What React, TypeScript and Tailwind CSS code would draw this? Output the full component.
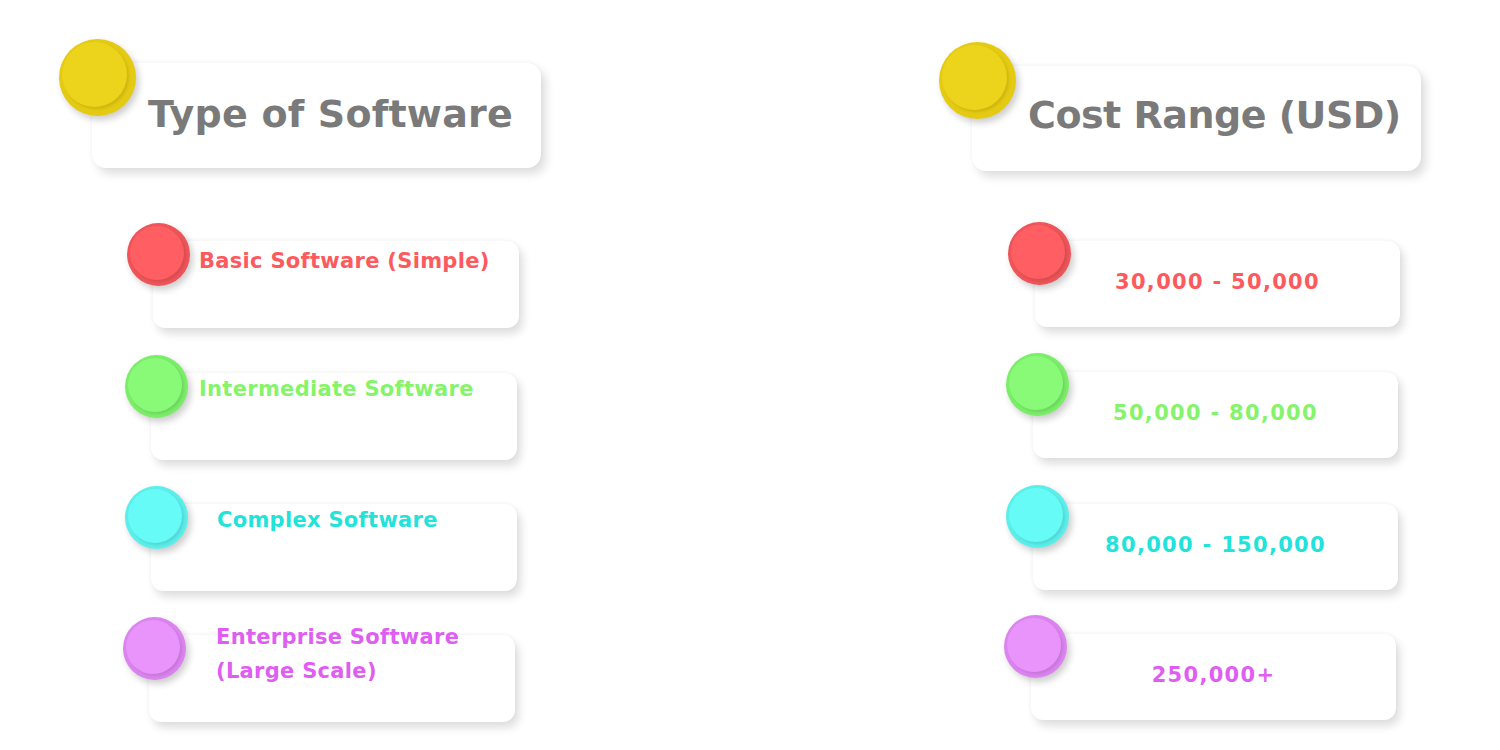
import React from "react";

type Item = {
  text: string[];
  color: string;
  outer: string;
  inner: string;
  ml: number;
  mt: number;
  tx: number;
  ty: number;
};

const font = { fontFamily: '"DejaVu Sans", "Open Sans", sans-serif' };

function Dot({ size, outer, inner }: { size: number; outer: string; inner: string }) {
  const innerSize = Math.round(size * 0.85);
  const off = Math.round(size * 0.04);
  return (
    <div
      className="rounded-full shadow-[3px_4px_7px_rgba(0,0,0,0.2)]"
      style={{ width: size, height: size, background: outer, paddingLeft: off, paddingTop: off }}
    >
      <div
        className="rounded-full shadow-[2px_2px_3px_rgba(0,0,0,0.1)]"
        style={{ width: innerSize, height: innerSize, background: inner }}
      />
    </div>
  );
}

const left: Item[] = [
  { text: ["Basic Software (Simple)"], color: "#fd5a5e", outer: "#ee5458", inner: "#ff5e62", ml: 61, mt: 0, tx: 46, ty: 12 },
  { text: ["Intermediate Software"], color: "#86f46b", outer: "#7bed69", inner: "#88fa78", ml: 59, mt: 45, tx: 48, ty: 8 },
  { text: ["Complex Software"], color: "#22e3da", outer: "#5ceeea", inner: "#66fbf6", ml: 59, mt: 44, tx: 66, ty: 8 },
  { text: ["Enterprise Software", "(Large Scale)"], color: "#df5ef2", outer: "#db84f0", inner: "#e994fb", ml: 57, mt: 44, tx: 67, ty: -6 },
];

const right: Item[] = [
  { text: ["30,000 - 50,000"], color: "#fd5a5e", outer: "#ee5458", inner: "#ff5e62", ml: 63, mt: 0, tx: 0, ty: 0 },
  { text: ["50,000 - 80,000"], color: "#86f46b", outer: "#7bed69", inner: "#88fa78", ml: 61, mt: 45, tx: 0, ty: 0 },
  { text: ["80,000 - 150,000"], color: "#22e3da", outer: "#5ceeea", inner: "#66fbf6", ml: 61, mt: 46, tx: 0, ty: 0 },
  { text: ["250,000+"], color: "#df5ef2", outer: "#db84f0", inner: "#e994fb", ml: 59, mt: 44, tx: 0, ty: 0 },
];

function Header({ title, shift, tracking }: { title: string; shift: number; tracking: number }) {
  return (
    <div className="relative w-[449px] h-[105px] rounded-[14px] bg-white shadow-[5px_6px_10px_rgba(0,0,0,0.13),0_-1px_4px_rgba(0,0,0,0.04)] flex items-center pl-[56px]">
      <div className="absolute left-[-33px] top-[-24px]">
        <Dot size={77} outer="#e4ca12" inner="#ecd41c" />
      </div>
      <span
        className="text-[38px] font-bold text-[#7a7a7a] leading-none whitespace-nowrap"
        style={{ ...font, marginTop: shift, letterSpacing: tracking }}
      >
        {title}
      </span>
    </div>
  );
}

function LeftCard({ item }: { item: Item }) {
  return (
    <div
      className="relative w-[366px] h-[87px] rounded-[12px] bg-white shadow-[4px_6px_9px_rgba(0,0,0,0.13),0_-1px_4px_rgba(0,0,0,0.04)]"
      style={{ marginLeft: item.ml, marginTop: item.mt }}
    >
      <div className="absolute left-[-26px] top-[-18px]">
        <Dot size={63} outer={item.outer} inner={item.inner} />
      </div>
      <div
        className="absolute text-[21px] font-bold leading-[34px] whitespace-nowrap tracking-[0.3px]"
        style={{ ...font, color: item.color, left: item.tx, top: item.ty - 9 }}
      >
        {item.text.map((t) => (
          <div key={t}>{t}</div>
        ))}
      </div>
    </div>
  );
}

function RightCard({ item }: { item: Item }) {
  return (
    <div
      className="relative w-[365px] h-[86px] rounded-[12px] bg-white shadow-[4px_6px_9px_rgba(0,0,0,0.13),0_-1px_4px_rgba(0,0,0,0.04)] flex items-center justify-center"
      style={{ marginLeft: item.ml, marginTop: item.mt }}
    >
      <div className="absolute left-[-27px] top-[-19px]">
        <Dot size={63} outer={item.outer} inner={item.inner} />
      </div>
      <span className="text-[21px] font-bold leading-none mt-[-4px] tracking-[1.3px]" style={{ ...font, color: item.color }}>
        {item.text[0]}
      </span>
    </div>
  );
}

export default function App() {
  return (
    <div className="w-[1500px] h-[750px] bg-white flex overflow-hidden">
      <div className="w-[880px] pl-[92px] pt-[63px] flex flex-col">
        <Header title="Type of Software" shift={-4} tracking={0.2} />
        <div className="mt-[73px] flex flex-col">
          {left.map((it) => (
            <LeftCard key={it.text[0]} item={it} />
          ))}
        </div>
      </div>
      <div className="pl-[92px] pt-[66px] flex flex-col">
        <Header title="Cost Range (USD)" shift={-8} tracking={-0.5} />
        <div className="mt-[70px] flex flex-col">
          {right.map((it) => (
            <RightCard key={it.text[0]} item={it} />
          ))}
        </div>
      </div>
    </div>
  );
}
